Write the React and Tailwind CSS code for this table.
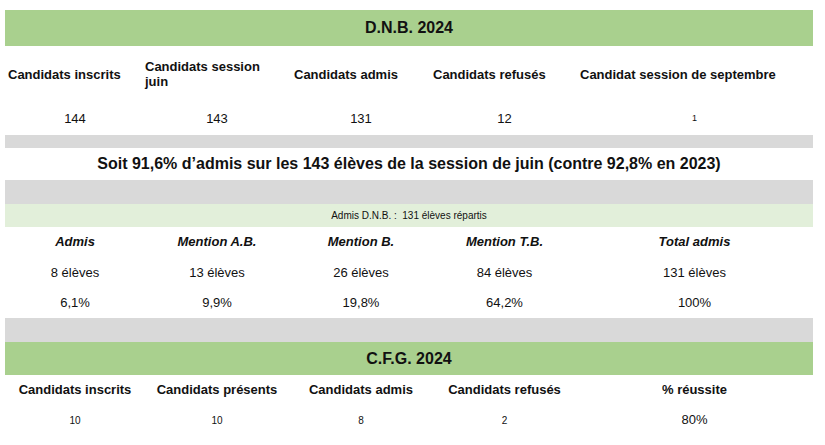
import React from 'react';

const cols = 'grid grid-cols-[140px_144px_144px_143px_237px]';

const dnbLabels = [
    { text: 'Candidats inscrits', cls: 'pl-[3px]' },
    { text: 'Candidats session juin', cls: 'pl-0 pr-[20px]' },
    { text: 'Candidats admis', cls: 'pl-[5px]' },
    { text: 'Candidats refusés', cls: 'pl-0' },
    { text: 'Candidat session de septembre', cls: 'pl-[4px]' }
];

const dnbValues = ['144', '143', '131', '12'];

const mentions = [
    { label: 'Admis', count: '8 élèves', pct: '6,1%' },
    { label: 'Mention A.B.', count: '13 élèves', pct: '9,9%' },
    { label: 'Mention B.', count: '26 élèves', pct: '19,8%' },
    { label: 'Mention T.B.', count: '84 élèves', pct: '64,2%' },
    { label: 'Total admis', count: '131 élèves', pct: '100%' }
];

const cfgLabels = ['Candidats inscrits', 'Candidats présents', 'Candidats admis', 'Candidats refusés', '% réussite'];
const cfgValues = ['10', '10', '8', '2'];

const App = () => {
    return (
        <div className="w-[825px] h-[445px] bg-white pt-[10px] font-['Liberation_Sans',Arial,sans-serif] text-[#111]">
            <div className="ml-[5px] w-[808px]">
                {/* D.N.B. */}
                <div className="h-[36px] bg-[#a9d08e] flex items-center justify-center text-[16px] font-bold">
                    D.N.B. 2024
                </div>

                <div className={`${cols} h-[56px] items-center text-[13px] font-bold leading-[15px]`}>
                    {dnbLabels.map((l) => (
                        <div key={l.text} className={l.cls}>{l.text}</div>
                    ))}
                </div>

                <div className={`${cols} h-[33px] items-center text-center text-[13px]`}>
                    {dnbValues.map((v, i) => (
                        <div key={i}>{v}</div>
                    ))}
                    <div className="text-[9px]">1</div>
                </div>

                <div className="h-[13px] bg-[#d9d9d9]" />

                <div className="h-[32px] flex items-center justify-center text-[16px] font-bold">
                    Soit 91,6% d’admis sur les 143 élèves de la session de juin (contre 92,8% en 2023)
                </div>

                <div className="h-[24px] bg-[#d9d9d9]" />

                <div className="h-[23px] bg-[#e2efda] flex items-center justify-center text-[10px] whitespace-pre">
                    Admis D.N.B. :  131 élèves répartis
                </div>

                <div className={`${cols} h-[30px] items-center text-center text-[13px] font-bold italic`}>
                    {mentions.map((m) => (
                        <div key={m.label}>{m.label}</div>
                    ))}
                </div>
                <div className={`${cols} h-[31px] items-center text-center text-[13px]`}>
                    {mentions.map((m) => (
                        <div key={m.label}>{m.count}</div>
                    ))}
                </div>
                <div className={`${cols} h-[30px] items-center text-center text-[13px]`}>
                    {mentions.map((m) => (
                        <div key={m.label}>{m.pct}</div>
                    ))}
                </div>

                <div className="h-[24px] bg-[#d9d9d9]" />

                {/* C.F.G. */}
                <div className="h-[33px] bg-[#a9d08e] flex items-center justify-center text-[16px] font-bold">
                    C.F.G. 2024
                </div>

                <div className={`${cols} h-[30px] items-center text-center text-[13px] font-bold`}>
                    {cfgLabels.map((l) => (
                        <div key={l}>{l}</div>
                    ))}
                </div>
                <div className={`${cols} h-[30px] items-center text-center text-[10px]`}>
                    {cfgValues.map((v, i) => (
                        <div key={i}>{v}</div>
                    ))}
                    <div className="text-[13px]">80%</div>
                </div>
            </div>
        </div>
    );
};

export default App;
